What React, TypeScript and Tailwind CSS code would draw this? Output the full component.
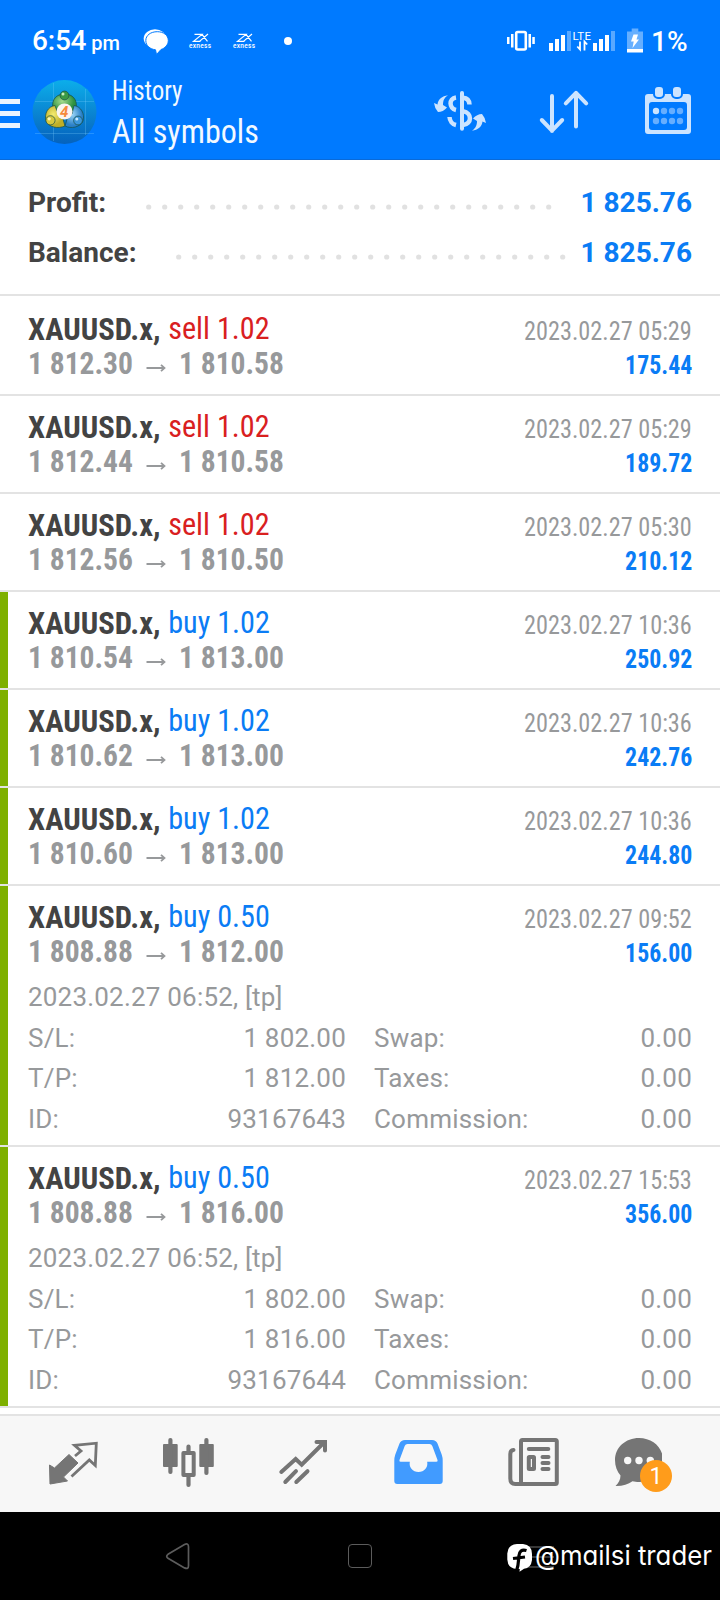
import React from "react";

type Deal = {
  side: "buy" | "sell";
  volume: string;
  open: string;
  close: string;
  time: string;
  profit: string;
  details?: { opened: string; sl: string; tp: string; id: string };
};

const deals: Deal[] = [
  { side: "sell", volume: "1.02", open: "1 812.30", close: "1 810.58", time: "2023.02.27 05:29", profit: "175.44" },
  { side: "sell", volume: "1.02", open: "1 812.44", close: "1 810.58", time: "2023.02.27 05:29", profit: "189.72" },
  { side: "sell", volume: "1.02", open: "1 812.56", close: "1 810.50", time: "2023.02.27 05:30", profit: "210.12" },
  { side: "buy", volume: "1.02", open: "1 810.54", close: "1 813.00", time: "2023.02.27 10:36", profit: "250.92" },
  { side: "buy", volume: "1.02", open: "1 810.62", close: "1 813.00", time: "2023.02.27 10:36", profit: "242.76" },
  { side: "buy", volume: "1.02", open: "1 810.60", close: "1 813.00", time: "2023.02.27 10:36", profit: "244.80" },
  {
    side: "buy", volume: "0.50", open: "1 808.88", close: "1 812.00", time: "2023.02.27 09:52", profit: "156.00",
    details: { opened: "2023.02.27 06:52, [tp]", sl: "1 802.00", tp: "1 812.00", id: "93167643" },
  },
  {
    side: "buy", volume: "0.50", open: "1 808.88", close: "1 816.00", time: "2023.02.27 15:53", profit: "356.00",
    details: { opened: "2023.02.27 06:52, [tp]", sl: "1 802.00", tp: "1 816.00", id: "93167644" },
  },
];

function Signal({ className }: { className: string }) {
  return (
    <svg className={className} width="22" height="20" viewBox="0 0 22 20" fill="#fff">
      <rect x="0" y="12" width="4" height="8" />
      <rect x="6" y="8" width="4" height="12" />
      <rect x="12" y="4" width="4" height="16" />
      <rect x="18" y="0" width="4" height="20" opacity=".35" />
    </svg>
  );
}

function Exness({ className }: { className: string }) {
  return (
    <svg className={className} width="24" height="28" viewBox="188 26 24 28">
      <path d="M194.500 33.400h7.500l-8.500 7h7M202 33.400l5.500 7M208 33l-8.500 7.400" fill="none" stroke="#fff" strokeWidth="1.200" />
      <text x="200" y="46.600" fill="#fff" textAnchor="middle" textLength="22" className="font-['Roboto'] text-[6.500px] font-medium">exness</text>
    </svg>
  );
}

function StatusBar() {
  return (
    <div className="flex h-[80px] items-center pl-[32px] pt-px font-['Roboto'] font-medium text-white">
      <div className="flex w-[111px] items-baseline gap-[5px]">
        <span className="mt-px text-[28px] leading-[40px] tracking-[-0.200px]">6:54</span>
        <span className="text-[20px]">pm</span>
      </div>
      <svg width="28" height="28" viewBox="143 26.500 28 28" fill="#fff">
        <ellipse cx="155" cy="38" rx="11.300" ry="9.300" />
        <path d="M157.300 31.200c6.400 0 11 3.700 11 8.800 0 4.600-3.600 7.800-7.300 9l-4.500 5-1-4.700c-5.500-.7-9.700-4-9.700-9.300 0-5.100 4.800-8.800 11.500-8.800z" stroke="#007aff" strokeWidth="1" />
      </svg>
      <Exness className="ml-[17px]" />
      <Exness className="ml-[20px]" />
      <span className="ml-[28px] size-[8px] rounded-full bg-white" />
      <svg className="ml-[215px]" width="28" height="28" viewBox="507 26.500 28 28" fill="#fff">
        <rect x="516.200" y="31.500" width="9.600" height="17.500" rx="1.500" fill="none" stroke="#fff" strokeWidth="2.600" />
        <rect x="507" y="36.500" width="2.500" height="7" />
        <rect x="511" y="33.500" width="2.500" height="13.500" />
        <rect x="528.500" y="33.500" width="2.500" height="13.500" />
        <rect x="532.300" y="36.500" width="2.500" height="7" />
      </svg>
      <Signal className="ml-[14px]" />
      <svg className="ml-[1px]" width="20" height="28" viewBox="572 26.500 20 28">
        <text x="572.500" y="39.600" fill="#fff" textLength="18.500" className="font-['Roboto'] text-[11.500px] font-normal">LTE</text>
        <path d="M580 41v8l-2.700-3M584.500 50v-9l2.700 3" fill="none" stroke="#fff" strokeWidth="1.800" />
      </svg>
      <Signal className="ml-[1px]" />
      <svg className="ml-[11px]" width="18" height="28" viewBox="626 26.500 18 28" fill="#fff">
        <path d="M627 31h4.700v-3h6.600v3h4.700v18h-16z" opacity=".4" />
        <rect x="627" y="48.500" width="16" height="3.500" />
        <path d="M633.500 34h4.500l-1.500 5h2.500l-6.500 8.500 1.200-6.500h-2.700z" />
      </svg>
      <span className="ml-[7px] mt-[2px] text-[28px] leading-[40px]">1%</span>
    </div>
  );
}

function Logo() {
  return (
    <svg className="ml-[12px]" width="65" height="64" viewBox="32 80 65 64">
      <defs>
        <linearGradient id="sky" x1="0" y1="0" x2="0" y2="1">
          <stop offset="0" stopColor="#0caeea" />
          <stop offset=".5" stopColor="#0a86d2" />
          <stop offset="1" stopColor="#0562bd" />
        </linearGradient>
        <radialGradient id="green" cx=".4" cy=".4"><stop offset="0" stopColor="#a5dc8c" /><stop offset="1" stopColor="#2e9140" /></radialGradient>
        <radialGradient id="yellow" cx=".4" cy=".4"><stop offset="0" stopColor="#f4ec72" /><stop offset="1" stopColor="#bfae28" /></radialGradient>
        <radialGradient id="blue" cx=".4" cy=".4"><stop offset="0" stopColor="#9bd6f7" /><stop offset="1" stopColor="#2a80c8" /></radialGradient>
      </defs>
      <circle cx="64.500" cy="112" r="32" fill="url(#sky)" />
      <path d="M53.500 83v58M85.500 89v46M35 101.500h59M35 133.500h59" stroke="#7fd0ff" strokeOpacity=".28" />
      <g stroke="#154d45" strokeWidth=".7">
        <path d="M53 109c-2-10 4-15 11.500-15s13.500 5 11.500 15l-4 3-7.500-7-7.500 7z" fill="url(#green)" />
        <path d="M55 105.500c-7 1-11 8-9 15.500 3 6.500 12 8 19 5l-2-7-5-5z" fill="url(#yellow)" />
        <path d="M74 105.500c7 1 11 8 9 15.500-3 6.500-12 8-18 5l2-7 5-5z" fill="url(#blue)" />
        <circle cx="64.500" cy="95.500" r="4.400" fill="#3b9a45" />
        <circle cx="50.500" cy="120.300" r="4.600" fill="#d6c840" />
        <circle cx="78" cy="120.500" r="4.400" fill="#3c97dc" />
      </g>
      <circle cx="63" cy="94" r="1.500" fill="#c9efbe" />
      <circle cx="49.200" cy="118.800" r="1.600" fill="#fbf7b5" />
      <circle cx="76.800" cy="119" r="1.500" fill="#c7eaff" />
      <circle cx="64.500" cy="111.500" r="8" fill="#fbf5f0" />
      <text x="64.200" y="117" textAnchor="middle" fill="#f58a3c" className="font-['Roboto'] text-[15px] font-bold italic">4</text>
    </svg>
  );
}

const swapArrow = "M448 95.300C444 98 443 101 443 105L447 107.500Q443 112 438 112Q434.500 108 434 103L437.500 104.500C438 99.500 442 96 448 95.300Z";

function Toolbar() {
  return (
    <div className="flex h-[80px] items-start">
      <div className="mt-[19px] flex w-[20px] flex-col gap-[7px]">
        <span className="h-[5px] bg-[#e9f4ff]" />
        <span className="h-[5px] bg-[#e9f4ff]" />
        <span className="h-[5px] bg-[#e9f4ff]" />
      </div>
      <Logo />
      <div className="ml-[15px] flex w-[321px] flex-col font-['Roboto_Condensed'] text-[#f2f9ff]">
        <span className="mt-[-9px] origin-left scale-x-[0.925] text-[27px] leading-[40px]">History</span>
        <span className="mt-[-1px] origin-left scale-x-[0.945] text-[34px] leading-[42px]">All symbols</span>
      </div>
      <svg width="54" height="64" viewBox="433 80 54 64" fill="#cce4ff">
        <path d={swapArrow} />
        <path d={swapArrow} transform="rotate(180 460 113)" />
        <rect x="460" y="91" width="4" height="39.700" rx="2" />
        <path d="M456 97.500C448.500 98.500 449 108.500 456 110M449.500 117c.2 4 3 7.200 6.500 8M463 97.800c4 .3 6.300 3 6.500 6.700M463 111.300c9.500 1.500 9 12.700 0 13.700" fill="none" stroke="#cce4ff" strokeWidth="4.500" />
      </svg>
      <svg className="ml-[51px]" width="52" height="64" viewBox="538 80 52 64" fill="none" stroke="#cce4ff" strokeWidth="4" strokeLinecap="round" strokeLinejoin="round">
        <path d="M552 96v35M541.800 120l10.200 10.700 10.200-10.700M576 126.500V93M565.800 103.300 576 92.800l10.200 10.500" />
      </svg>
      <svg className="ml-[54px]" width="48" height="64" viewBox="644 80 48 64" fill="#cce4ff">
        <path fillRule="evenodd" d="M648 94h40q3 0 3 3v34q0 3-3 3h-40q-3 0-3-3v-34q0-3 3-3zM652 102q-3 0-3 3v22q0 3 3 3h32q3 0 3-3v-22q0-3-3-3z" />
        <rect x="654" y="86" width="10" height="12" rx="4" stroke="#007aff" strokeWidth="2" />
        <rect x="672" y="86" width="10" height="12" rx="4" stroke="#007aff" strokeWidth="2" />
        <circle cx="656" cy="111" r="3.200" />
        {[[664, 111], [672, 111], [680, 111], [656, 121], [664, 121], [672, 121], [680, 121]].map(([x, y]) => (
          <circle key={`${x}-${y}`} cx={x} cy={y} r="3.200" fill="#66aeff" />
        ))}
      </svg>
    </div>
  );
}

function SummaryRow({ label, value, count, labelClass }: { label: string; value: string; count: number; labelClass: string }) {
  return (
    <div className="flex h-[50px] items-center font-['Roboto'] text-[28px] leading-[50px]">
      <span className={`shrink-0 font-bold text-[#434343] ${labelClass}`}>{label}</span>
      <svg className="mt-[8px] shrink-0" width={count * 16} height="6" viewBox={`0 0 ${count * 16} 6`} fill="#e1e1e1">
        {Array.from({ length: count }, (_, i) => <circle key={i} cx={2.7 + i * 16} cy="3" r="2.600" />)}
      </svg>
      <span className="ml-auto font-bold text-[#0a7cf5]">{value}</span>
    </div>
  );
}

function Field({ label, value }: { label: string; value: string }) {
  return (
    <div className="flex justify-between">
      <span>{label}</span>
      <span>{value}</span>
    </div>
  );
}

function DealRow({ deal, first }: { deal: Deal; first: boolean }) {
  const buy = deal.side === "buy";
  return (
    <div className={`border-b-2 border-[#e3e3e3] ${first ? "pt-[2px]" : ""}`}>
      <div className={`border-l-8 pl-[20px] pr-[28px] ${buy ? "border-l-[#7eb000]" : "border-l-transparent"} ${deal.details ? "h-[259px]" : "h-[96px]"}`}>
        <div className="flex h-[84px] justify-between pt-[14px] font-['Roboto_Condensed']">
          <div className="flex flex-col">
            <div className="flex origin-left scale-x-[0.958] gap-[8px] text-[32px] leading-[34px]">
              <span className="font-bold text-[#434343]">XAUUSD.x,</span>
              <span className={`text-[31.500px] ${buy ? "text-[#0a7cf5]" : "text-[#d9201f]"}`}>{deal.side} {deal.volume}</span>
            </div>
            <div className="mt-px flex text-[31px] font-bold leading-[34px] text-[#97999b]">
              <span className="w-[117px] origin-left scale-x-[0.953] whitespace-nowrap">{deal.open}</span>
              <svg className="mt-[15px]" width="22" height="12" viewBox="0 0 22 12" fill="none" stroke="#97999b" strokeWidth="1.800">
                <path d="M1.500 6h18M16 2.800 19.500 6 16 9.200" />
              </svg>
              <span className="ml-[12px] origin-left scale-x-[0.953] whitespace-nowrap">{deal.close}</span>
            </div>
          </div>
          <div className="flex flex-col items-end">
            <span className="mt-[2px] origin-right scale-x-[0.933] text-[26px] leading-[34px] text-[#97999b]">{deal.time}</span>
            <span className="origin-right scale-x-[0.917] text-[26px] font-bold leading-[34px] text-[#0a7cf5]">{deal.profit}</span>
          </div>
        </div>
        {deal.details && (
          <div className="pt-[6.500px] font-['Roboto'] text-[26px] leading-[40.500px] tracking-[0.200px] text-[#97999b]">
            <div className="h-[41px]">{deal.details.opened}</div>
            <div className="grid grid-cols-2 gap-x-[28px]">
              <Field label="S/L:" value={deal.details.sl} />
              <Field label="Swap:" value="0.00" />
              <Field label="T/P:" value={deal.details.tp} />
              <Field label="Taxes:" value="0.00" />
              <Field label="ID:" value={deal.details.id} />
              <Field label="Commission:" value="0.00" />
            </div>
          </div>
        )}
      </div>
    </div>
  );
}

function TabBar() {
  return (
    <nav className="flex h-[98px] items-start border-t-2 border-[#e3e3e3] bg-[#f7f7f7] pl-[46px] pt-[16px]">
      <svg width="54" height="60" viewBox="46 1432 54 60" fill="#757575">
        <path d="M49.500 1465 54.500 1468 69 1454.500 78 1463 63.500 1477 67.500 1481 50 1484Z" stroke="#757575" strokeLinejoin="round" />
        <path d="M75 1456 81 1451 74.500 1445.300 96.300 1443.200 95.300 1465.500 89.300 1460 71.500 1476.500" fill="none" stroke="#757575" strokeWidth="2.800" />
      </svg>
      <svg className="ml-[60px]" width="56" height="60" viewBox="160 1432 56 60" fill="#757575">
        <rect x="163" y="1444" width="14.700" height="23" rx="1" />
        <rect x="168.300" y="1438" width="4.200" height="36" rx="2" />
        <rect x="199.300" y="1444" width="14.500" height="23" rx="1" />
        <rect x="204.300" y="1438" width="4.200" height="37" rx="2" />
        <rect x="183.400" y="1453" width="10.300" height="22" fill="none" stroke="#757575" strokeWidth="4" strokeLinejoin="round" />
        <path d="M188.500 1446.500v5M188.500 1477v8" stroke="#757575" strokeWidth="4.200" strokeLinecap="round" />
      </svg>
      <svg className="ml-[62px]" width="52" height="60" viewBox="278 1432 52 60" fill="none" stroke="#757575" strokeWidth="4" strokeLinecap="round">
        <path d="M281.300 1472 295.700 1459 301.700 1464.700 324 1442.500M285.300 1482 296 1471.200M296.300 1482 307.500 1471.200" />
        <path d="M316.500 1442h8.500v8.500" />
      </svg>
      <svg className="ml-[62px]" width="52" height="60" viewBox="392 1432 52 60" fill="#419bff">
        <path fillRule="evenodd" d="M405 1440h27q4 0 5.500 3.500l4.200 11q1 3 1 6v20.500q0 3-3 3h-42.400q-3 0-3-3v-20.500q0-3 1-6l4.200-11q1.500-3.500 5.500-3.500zM407.500 1444q-2 0-2.800 2l-5.200 14q-.6 1.800 1 1.800h9.300c-1 6 3 10.200 8.700 10.200s9.700-4.200 8.700-10.200h9.300q1.600 0 1-1.800l-5.200-14q-.8-2-2.800-2z" />
      </svg>
      <svg className="ml-[62px]" width="56" height="60" viewBox="506 1432 56 60" fill="none" stroke="#757575" strokeWidth="4" strokeLinecap="round" strokeLinejoin="round">
        <rect x="521" y="1440" width="35.800" height="44" rx="1.500" />
        <path d="M513.500 1450q-3.200.3-3.200 4v24.500q0 5.500 5 5.500h8" />
        <path d="M528.800 1449h19.500" />
        <rect x="528.800" y="1457" width="5.200" height="12" rx=".5" />
        <path d="M542.500 1457h6M542.500 1463h6M542.500 1469h6" />
      </svg>
      <div className="relative ml-[50px]">
        <svg width="50" height="60" viewBox="612 1432 50 60" fill="#757575">
          <path d="M639 1438c13.500 0 24 9.500 24 22 0 13-10.500 22-24 22-2.500 0-4.500-.3-6.500-.8-4.500 3-10 5-17 4.800 3-3 5-6.500 5-10.500-3.500-4-5.500-9.500-5.500-15.500 0-12.500 10.500-22 24-22z" />
          <g fill="#f7f7f7"><circle cx="627.700" cy="1460.500" r="3.700" /><circle cx="639" cy="1460.500" r="3.700" /><circle cx="650.300" cy="1460.500" r="3.700" /></g>
        </svg>
        <span className="absolute left-[28px] top-[28px] flex size-[32px] items-center justify-center rounded-full bg-[#ff9c1b] font-['Roboto'] text-[23px] leading-none text-white">1</span>
      </div>
    </nav>
  );
}

function SystemNav() {
  return (
    <div className="flex h-[88px] items-center bg-black pl-[164px]">
      <svg width="28" height="30" viewBox="164 1541 28 30" fill="none" stroke="#5c5c5c" strokeWidth="1.700">
        <path d="M168 1554.300 184.500 1544.500q4-1.800 4 2.200v19q0 4-4 2.200L168 1558.300q-2.600-2 0-4z" />
      </svg>
      <span className="ml-[156px] size-[24px] rounded-[4px] border-[1.500px] border-[#5c5c5c]" />
      <div className="relative ml-[133px] flex items-center">
        <svg width="52" height="40" viewBox="505 1536 52 40">
          <path d="M528 1547h26M528 1557h26M528 1567h26" stroke="#4a4a4a" strokeWidth="1.700" />
          <path d="M517 1544h6q9 1 9 10v6q-1 8-8 8.800l-4.500 3 .3-2.800h-3q-9-.5-9.500-9.500v-6q.5-9 9.700-9.500z" fill="#fff" />
          <path d="M526.500 1550.500c-5-1.500-7.200 1-7.600 5.500-.4 5.500-.3 9-2.400 15M513 1558.500l12-1.500" fill="none" stroke="#000" strokeWidth="3.200" />
        </svg>
        <span className="absolute left-[30px] top-px origin-left scale-x-[0.955] whitespace-nowrap font-['Inter'] text-[27px] leading-[38px] text-white [font-feature-settings:'cv11']">@mailsi trader</span>
      </div>
    </div>
  );
}

export default function App() {
  return (
    <div className="flex h-[1600px] w-[720px] flex-col overflow-hidden bg-white">
      <header className="h-[160px] border-b border-[#0a6ad8] bg-[#007aff]">
        <StatusBar />
        <Toolbar />
      </header>
      <section className="h-[136px] border-b-2 border-[#e3e3e3] px-[28px] pt-[18px]">
        <SummaryRow label="Profit:" value="1 825.76" count={26} labelClass="w-[118px]" />
        <SummaryRow label="Balance:" value="1 825.76" count={25} labelClass="w-[148px]" />
      </section>
      <main className="flex h-[1118px] flex-col">
        {deals.map((deal, i) => <DealRow key={i} deal={deal} first={i === 0} />)}
      </main>
      <TabBar />
      <SystemNav />
    </div>
  );
}
